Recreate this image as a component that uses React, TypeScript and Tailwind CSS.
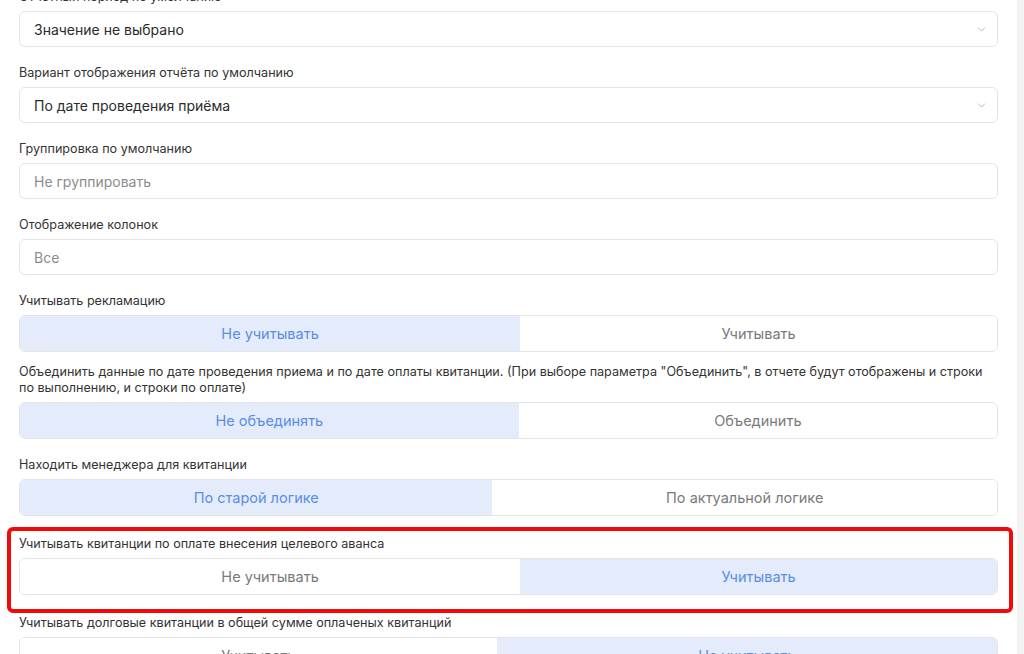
import React, { useState } from 'react';
import { ChevronDown } from 'lucide-react';

interface Option {
  value: string;
  label: string;
}

const font = { fontFamily: 'Inter, "Noto Sans", sans-serif' };

const Label: React.FC<{ children: React.ReactNode }> = ({ children }) => (
  <div className="text-[12.6px] leading-4 text-[#333] mb-[6px]">{children}</div>
);

const SelectBox: React.FC<{ value: string; placeholder?: boolean; arrow?: boolean }> = ({ value, placeholder, arrow }) => (
  <div className="h-9 flex items-center justify-between border border-[#e4e4e4] rounded-md bg-white pl-[14px] pr-[9px]">
    <span className={`text-[14px] ${placeholder ? 'text-[#8c8c8c]' : 'text-[#2b2b2b]'}`}>{value}</span>
    {arrow && <ChevronDown className="w-[13px] h-[13px] text-[#a9a9a9]" strokeWidth={1.5} />}
  </div>
);

interface ToggleProps {
  options: Option[];
  value: string;
  onChange: (v: string) => void;
}

const Toggle: React.FC<ToggleProps> = ({ options, value, onChange }) => (
  <div className="h-[37px] flex border border-[#e4e4e4] rounded-md overflow-hidden bg-white">
    {options.map((o) => (
      <button
        key={o.value}
        type="button"
        onClick={() => onChange(o.value)}
        className={`flex-auto px-4 text-[14.5px] ${
          value === o.value ? 'bg-[#e4ecfb] text-[#5a8ee3]' : 'bg-white text-[#7a7a7a]'
        }`}
      >
        {o.label}
      </button>
    ))}
  </div>
);

export default function App() {
  const [values, setValues] = useState<Record<string, string>>({
    claims: 'no',
    merge: 'no',
    manager: 'old',
    advance: 'yes',
    debt: 'no',
  });

  const set = (key: string) => (v: string) => setValues((prev) => ({ ...prev, [key]: v }));

  const yesNo: Option[] = [
    { value: 'no', label: 'Не учитывать' },
    { value: 'yes', label: 'Учитывать' },
  ];

  return (
    <div className="w-[1024px] h-[654px] overflow-hidden flex bg-white" style={font}>
      <div className="flex-1 px-[19px]">
        <div className="flex flex-col -mt-[11px]">
          <div className="mb-[18px]">
            <Label>Отчётный период по умолчанию</Label>
            <SelectBox value="Значение не выбрано" arrow />
          </div>

          <div className="mb-[18px]">
            <Label>Вариант отображения отчёта по умолчанию</Label>
            <SelectBox value="По дате проведения приёма" arrow />
          </div>

          <div className="mb-[18px]">
            <Label>Группировка по умолчанию</Label>
            <SelectBox value="Не группировать" placeholder />
          </div>

          <div className="mb-[18px]">
            <Label>Отображение колонок</Label>
            <SelectBox value="Все" placeholder />
          </div>

          <div className="mb-[12px]">
            <Label>Учитывать рекламацию</Label>
            <Toggle options={yesNo} value={values.claims} onChange={set('claims')} />
          </div>

          <div className="mb-[18px]">
            <Label>
              Объединить данные по дате проведения приема и по дате оплаты квитанции. (При выборе параметра
              "Объединить", в отчете будут отображены и строки по выполнению, и строки по оплате)
            </Label>
            <Toggle
              options={[
                { value: 'no', label: 'Не объединять' },
                { value: 'yes', label: 'Объединить' },
              ]}
              value={values.merge}
              onChange={set('merge')}
            />
          </div>

          <div className="mb-[11px]">
            <Label>Находить менеджера для квитанции</Label>
            <Toggle
              options={[
                { value: 'old', label: 'По старой логике' },
                { value: 'new', label: 'По актуальной логике' },
              ]}
              value={values.manager}
              onChange={set('manager')}
            />
          </div>

          {/* выделенный блок */}
          <div className="-ml-3 -mr-[15px] mb-[2px] border-4 border-[#f00a0a] rounded-md pl-2 pr-[11px] pt-[5px] pb-[14px]">
            <Label>Учитывать квитанции по оплате внесения целевого аванса</Label>
            <Toggle options={yesNo} value={values.advance} onChange={set('advance')} />
          </div>

          <div className="mb-[18px]">
            <Label>Учитывать долговые квитанции в общей сумме оплаченых квитанций</Label>
            <Toggle
              options={[
                { value: 'yes', label: 'Учитывать' },
                { value: 'no', label: 'Не учитывать' },
              ]}
              value={values.debt}
              onChange={set('debt')}
            />
          </div>
        </div>
      </div>
      <div className="w-[7px] bg-[#f3f3f3]" />
    </div>
  );
}
